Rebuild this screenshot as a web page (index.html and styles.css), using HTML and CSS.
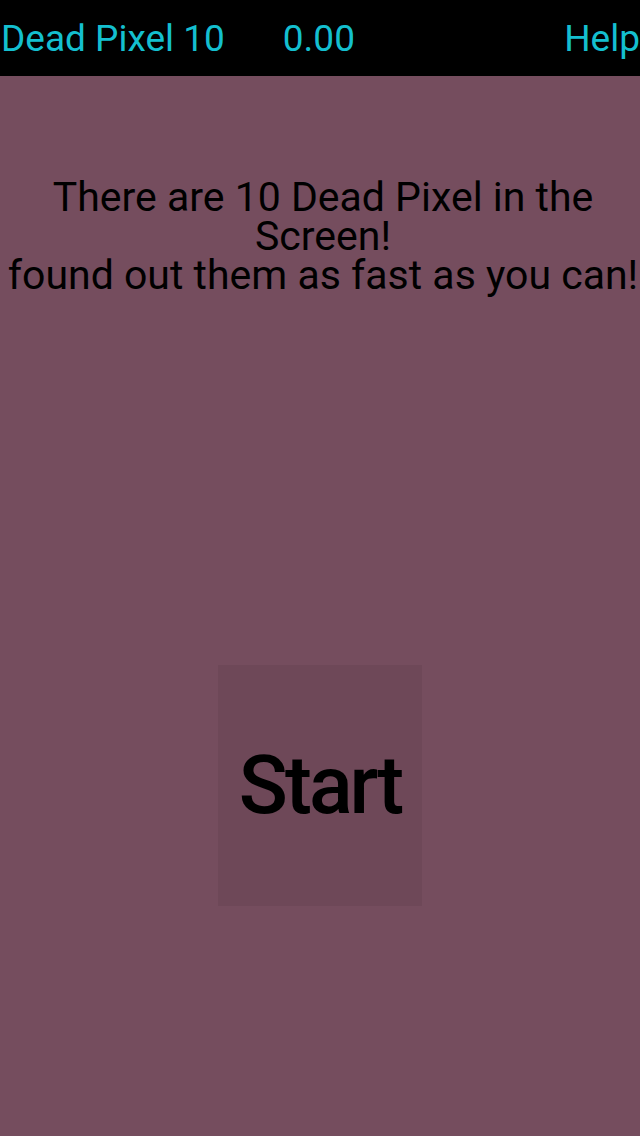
FILE: index.html
```html
<!DOCTYPE html>
<html>
<head>
<meta charset="utf-8">
<link rel="stylesheet" href="styles.css">
</head>
<body>
<div class="app">
  <header class="topbar">
    <span class="title">Dead Pixel 10</span>
    <span class="score">0.00</span>
    <span class="help">Help</span>
  </header>
  <main class="stage">
    <p class="message">There are 10 Dead Pixel in the Screen!<br>found out them as fast as you can!</p>
    <button class="start">Start</button>
  </main>
</div>
</body>
</html>
```
FILE: styles.css
```css
html, body {
  margin: 0;
  padding: 0;
  background: #754d5e;
}
.app {
  width: 640px;
  height: 1136px;
  display: flex;
  flex-direction: column;
  font-family: Roboto, "Noto Sans", sans-serif;
  overflow: hidden;
}
.topbar {
  height: 76px;
  background: #000;
  display: flex;
  align-items: center;
  color: #14bfcf;
  font-size: 37px;
  padding-left: 1px;
  white-space: nowrap;
}
.score {
  margin-left: 58px;
}
.help {
  margin-left: auto;
}
.stage {
  flex: 1;
  display: flex;
  flex-direction: column;
  align-items: center;
}
.message {
  margin: 102px 0 0;
  width: 640px;
  padding-left: 6px;
  box-sizing: border-box;
  text-align: center;
  font-size: 41px;
  line-height: 39px;
  color: #000;
}
.start {
  margin-top: 370px;
  width: 204px;
  height: 241px;
  background: #6e4858;
  border: none;
  padding: 0;
  font-family: Roboto, "Noto Sans", sans-serif;
  font-size: 81px;
  font-weight: 500;
  letter-spacing: -3px;
  color: #000;
}
```
